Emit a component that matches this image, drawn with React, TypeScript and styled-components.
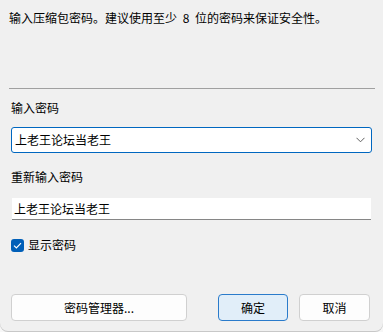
import React from 'react';
import styled, { createGlobalStyle } from 'styled-components';

const GlobalStyle = createGlobalStyle`
  html, body {
    margin: 0;
    padding: 0;
    background: #f7f7f7;
  }
  * {
    box-sizing: border-box;
  }
`;

const Dialog = styled.div`
  width: 383px;
  height: 332px;
  background: #f0f0f0;
  border-bottom-left-radius: 8px;
  border-bottom-right-radius: 8px;
  box-shadow: inset 0 -1px 0 #c8c8c8;
  font-family: 'Noto Sans CJK SC', 'Noto Sans', sans-serif;
  font-size: 12px;
  line-height: 16px;
  color: #000;
  display: flex;
  flex-direction: column;
  padding: 10px 8px 0 11px;
`;

const Intro = styled.div`
  margin-left: -2px;
  white-space: nowrap;
  word-spacing: 3px;
`;

const Separator = styled.div`
  height: 1px;
  background: #a0a0a0;
  margin: 62px 0 0 -2px;
`;

const Label = styled.div<{ $gap: number }>`
  margin-top: ${({ $gap }) => $gap}px;
`;

const Combo = styled.div`
  margin-top: 11px;
  width: 361px;
  height: 26px;
  background: #fff;
  border: 1px solid #0067c0;
  border-radius: 3px;
  display: flex;
  align-items: center;
  justify-content: space-between;
  padding: 0 6px 0 3px;
`;

const TextInput = styled.div`
  margin: 13px 0 0 1px;
  width: 359px;
  height: 22px;
  background: #fff;
  border-bottom: 1px solid #868686;
  display: flex;
  align-items: center;
  padding: 0 3px 0 2px;
`;

const CheckRow = styled.label`
  margin-top: 17px;
  display: flex;
  align-items: center;
  gap: 4px;
  height: 16px;
`;

const CheckBox = styled.span`
  width: 13px;
  height: 13px;
  border-radius: 3px;
  background: #005fb8;
  display: flex;
  align-items: center;
  justify-content: center;
`;

const Footer = styled.div`
  margin-top: 41px;
  display: flex;
  align-items: center;
  width: 359px;
`;

const Spacer = styled.div`
  flex: 1;
`;

const Button = styled.button<{ $width: number; $primary?: boolean }>`
  width: ${({ $width }) => $width}px;
  height: 27px;
  margin: 0;
  padding: 0;
  border-radius: 4px;
  font: inherit;
  color: #000;
  background: ${({ $primary }) => ($primary ? '#e1eef9' : '#fdfdfd')};
  border: 1px solid ${({ $primary }) => ($primary ? '#2a7bcb' : '#d0d0d0')};
  & + & {
    margin-left: 11px;
  }
`;

export default function App() {
  return (
    <>
      <GlobalStyle />
      <Dialog>
        <Intro>输入压缩包密码。建议使用至少 8 位的密码来保证安全性。</Intro>
        <Separator />
        <Label $gap={11}>输入密码</Label>
        <Combo>
          <span>上老王论坛当老王</span>
          <svg width="9" height="6" viewBox="0 0 9 6">
            <path d="M0.5 0.8 L4.5 4.8 L8.5 0.8" fill="none" stroke="#5f5f5f" strokeWidth="1" />
          </svg>
        </Combo>
        <Label $gap={16}>重新输入密码</Label>
        <TextInput>上老王论坛当老王</TextInput>
        <CheckRow>
          <CheckBox>
            <svg width="9" height="7" viewBox="0 0 9 7">
              <path d="M1 3.6 L3.4 6 L8 1.2" fill="none" stroke="#fff" strokeWidth="1.2" />
            </svg>
          </CheckBox>
          <span>显示密码</span>
        </CheckRow>
        <Footer>
          <Button $width={176}>密码管理器...</Button>
          <Spacer />
          <Button $width={70} $primary>
            确定
          </Button>
          <Button $width={71}>取消</Button>
        </Footer>
      </Dialog>
    </>
  );
}
